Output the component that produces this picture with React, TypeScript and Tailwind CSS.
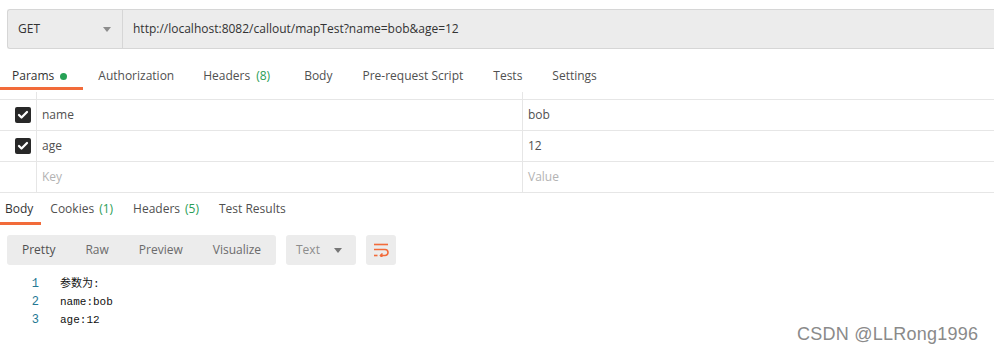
import { Check } from "lucide-react";

const requestTabs = [
  { label: "Params", dot: true, active: true },
  { label: "Authorization" },
  { label: "Headers", count: "(8)" },
  { label: "Body" },
  { label: "Pre-request Script" },
  { label: "Tests" },
  { label: "Settings" },
];

const params = [
  { key: "name", value: "bob" },
  { key: "age", value: "12" },
];

const codeLines = ["参数为:", "name:bob", "age:12"];

function Caret({ className }: { className?: string }) {
  return (
    <svg width="8" height="5" viewBox="0 0 8 5" className={className}>
      <path d="M0 0 H8 L4 5 Z" fill="currentColor" />
    </svg>
  );
}

function WrapIcon() {
  return (
    <svg width="16" height="14" viewBox="0 0 16 14" fill="none" stroke="#f26b3a" strokeWidth="1.6">
      <path d="M1 1.5 H15" />
      <path d="M1 6.5 H12 a3 3 0 0 1 0 6 H7.5" />
      <path d="M9.5 10.5 L7.5 12.5 L9.5 14.5" />
      <path d="M1 12.5 H4.5" />
    </svg>
  );
}

export default function App() {
  return (
    <div className="relative h-[355px] w-[994px] overflow-hidden bg-white font-['Open_Sans',sans-serif] text-[12px] text-[#505050]">
      <div className="pl-[7px] pt-[9px]">
        <div className="flex h-[40px] rounded-l-[3px] border border-r-0 border-[#d6d6d6] bg-[#ececec]">
          <div className="flex w-[115px] items-center justify-between border-r border-[#d6d6d6] pl-[10px] pr-[11px] text-[#333]">
            <span>GET</span>
            <Caret className="text-[#8c8c8c]" />
          </div>
          <div className="flex items-center pl-[10px] text-[#333]">
            http://localhost:8082/callout/mapTest?name=bob&amp;age=12
          </div>
        </div>
      </div>

      <div className="mt-[19px] flex">
        {requestTabs.map((tab, i) => (
          <div
            key={tab.label}
            className={
              (i === 0 ? "pl-[12px] pr-[16px] " : tab.count ? "pl-[14px] pr-[19px] " : "px-[15px] ") +
              (tab.active ? "border-[#f26b3a] text-[#333] " : "border-transparent ") +
              "flex items-center border-b-[3px] pb-[3px] leading-[16px]"
            }
          >
            <span>{tab.label}</span>
            {tab.count && <span className="ml-[6px] text-[#2a9d55]">{tab.count}</span>}
            {tab.dot && <span className="ml-[6px] h-[7px] w-[7px] rounded-full bg-[#26a155]" />}
          </div>
        ))}
      </div>

      <div className="grid grid-cols-[37px_486px_1fr]">
        <div className="mt-[2px] h-[7px] border-r border-[#e6e6e6]" />
        <div className="mt-[2px] h-[7px] border-r border-[#e6e6e6]" />
        <div className="mt-[2px] h-[7px]" />
        {params.map((p) => (
          <div key={p.key} className="contents">
            <div className="flex h-[31px] items-center justify-end border-r border-t border-[#e6e6e6] pr-[5px]">
              <span className="flex h-[16px] w-[16px] items-center justify-center rounded-[2px] bg-[#282828]">
                <Check size={12} strokeWidth={4.5} color="#fff" />
              </span>
            </div>
            <div className="flex h-[31px] items-center border-r border-t border-[#e6e6e6] pl-[5px] text-[#505050]">
              {p.key}
            </div>
            <div className="flex h-[31px] items-center border-t border-[#e6e6e6] pl-[5px] text-[#505050]">
              {p.value}
            </div>
          </div>
        ))}
        <div className="h-[32px] border-y border-r border-[#e6e6e6]" />
        <div className="flex h-[32px] items-center border-y border-r border-[#e6e6e6] pl-[5px] text-[#b3b3b3]">
          Key
        </div>
        <div className="flex h-[32px] items-center border-y border-[#e6e6e6] pl-[5px] text-[#b3b3b3]">
          Value
        </div>
      </div>

      <div className="mt-[8px] flex leading-[16px]">
        <div className="border-b-[3px] border-[#f26b3a] pb-[5px] pl-[5px] pr-[8px] text-[#333]">Body</div>
        <div className="ml-[9px] flex pb-[8px]">
          Cookies<span className="ml-[5px] text-[#2a9d55]">(1)</span>
        </div>
        <div className="ml-[20px] flex pb-[8px]">
          Headers<span className="ml-[5px] text-[#2a9d55]">(5)</span>
        </div>
        <div className="ml-[20px] pb-[8px]">Test Results</div>
      </div>

      <div className="ml-[7px] mt-[10px] flex h-[30px] gap-[10px]">
        <div className="flex w-[269px] items-center rounded-[3px] bg-[#ececec] text-[#6b6b6b]">
          <span className="px-[15px] text-[#505050]">Pretty</span>
          <span className="px-[15px]">Raw</span>
          <span className="px-[15px]">Preview</span>
          <span className="px-[15px]">Visualize</span>
        </div>
        <div className="flex w-[70px] items-center justify-between rounded-[3px] bg-[#ececec] pl-[10px] pr-[14px] text-[#8c8c8c]">
          <span>Text</span>
          <Caret className="text-[#777]" />
        </div>
        <div className="flex w-[30px] items-center justify-center rounded-[3px] bg-[#ececec]">
          <WrapIcon />
        </div>
      </div>

      <div className="mt-[10px] font-['Liberation_Mono','Noto_Sans_CJK_SC',monospace] text-[11px] leading-[18px]">
        {codeLines.map((line, i) => (
          <div key={i} className="flex">
            <span className="w-[40px] pr-[1px] text-right text-[12px] text-[#237893]">{i + 1}</span>
            <span className="pl-[20px] text-[#111]">{line}</span>
          </div>
        ))}
      </div>

      <div className="absolute left-[797px] top-[323px] font-['Liberation_Sans',sans-serif] text-[18px] leading-[22px] tracking-[0.25px] text-[#8a8a8a] [text-shadow:0_0_1px_#fff]">
        CSDN @LLRong1996
      </div>
    </div>
  );
}
